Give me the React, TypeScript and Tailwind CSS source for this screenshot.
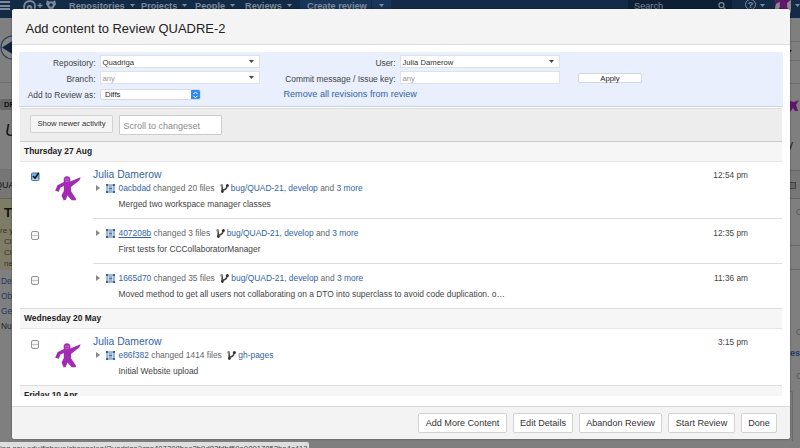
import React from "react";

const link = "text-[#3363a5]";

function Caret({ className = "" }: { className?: string }) {
  return (
    <svg className={className} width="5" height="3" viewBox="0 0 5 3">
      <path d="M0 0h5L2.5 3z" fill="currentColor" />
    </svg>
  );
}

function Avatar({ color = "#a32bb4" }: { color?: string }) {
  return (
    <svg width="26" height="25" viewBox="0 0 26 25" className="block shrink-0">
      <path
        d="M8.6 4.2C8.4 1.6 10 .3 12 .3s3.600 1.200 3.400 3.900l-.3 1.300L25.600 1.200l-1.100 3L16 11l.2 4.500 4.800 7.300-.2 1.400h-4.100l-4.200-4.700-1.700 4.300-2.100.8-2.200-5L8.800 15V10l-3.600 1.800-1.300 4L.2 14.800l2.300-5.600L8.900 6z"
        fill={color}
      />
      <path d="M10 3.200h4.100M10.300 5c1 .8 2.600.8 3.500 0" stroke="#dfa5e8" strokeWidth=".6" fill="none" />
    </svg>
  );
}

function CommitIcon() {
  return (
    <svg width="9" height="9" viewBox="0 0 9 9" className="block shrink-0">
      <path d="M1 1h7v7H1z" fill="#e9f0f8" stroke="#4f78a5" strokeWidth="1" />
      <path d="M0 0h2v2H0zM7 0h2v2H7zM0 7h2v2H0zM7 7h2v2H7z" fill="#376795" />
      <path d="M2.700 3h3.600M2.700 4.500h3.600M2.700 6h3.600" stroke="#376795" strokeWidth=".9" />
    </svg>
  );
}

function BranchIcon() {
  return (
    <svg width="9" height="9" viewBox="0 0 9 9" className="block shrink-0">
      <path d="M2.200 1.500v6M2.400 6.300C5.600 6 6.900 4.500 7.200 1.700" stroke="#444" strokeWidth="1.500" fill="none" />
      <circle cx="1.700" cy="1.400" r="1.400" fill="#888" />
      <circle cx="7.400" cy="1.500" r="1.500" fill="#333" />
      <circle cx="2.400" cy="7.500" r="1.400" fill="#333" />
    </svg>
  );
}

function Checkbox({ checked = false }: { checked?: boolean }) {
  if (checked) {
    return (
      <svg width="10" height="11" viewBox="0 0 10 11" className="block">
        <rect x="1.500" y="2" width="7.500" height="7.500" rx="1" fill="#79b3e8" stroke="#4a6f99" />
        <path d="M2.500 7.500H8v1.500H2.500z" fill="#b9e4fa" />
        <path d="M3 5l2 2.300L8.800 1.800" stroke="#111" strokeWidth="1.500" fill="none" />
      </svg>
    );
  }
  return (
    <div className="mt-[2px] ml-px flex h-[9px] w-[8px] flex-col justify-center rounded-[2px] border border-[#959595] bg-[#f5f5f5]">
      <div className="h-px bg-[#c4c4c4]" />
    </div>
  );
}

type CommitProps = {
  hash: string;
  files: string;
  message: string;
  time: string;
  pages?: boolean;
  author?: boolean;
  checked?: boolean;
  hovered?: boolean;
  last?: boolean;
};

function Commit({ hash, files, message, time, pages, author, checked, hovered, last }: CommitProps) {
  return (
    <div className={`flex ${author ? (last ? "h-[56px]" : "h-[57px]") : last ? "h-[44px]" : "h-[45px]"}`}>
      <div className={`w-[35px] shrink-0 pl-[10px] ${author ? "pt-[9px]" : "pt-[10px]"}`}>
        <Checkbox checked={checked} />
      </div>
      <div className="w-[38px] shrink-0 pt-[14px]">{author && <Avatar />}</div>
      <div
        className={`flex grow justify-between pr-[34px] text-[8.420px] text-[#444] ${last ? "" : "border-b border-[#ddd]"} ${author ? "pt-[5px]" : "pt-[7px]"}`}
      >
        <div>
          {author && <div className={`h-[14px] text-[10.350px] leading-[16px] ${link}`}>Julia Damerow</div>}
          <div className="flex h-[14px] items-center leading-[14px] whitespace-pre text-[#666]">
            <svg width="4" height="6" viewBox="0 0 4 6" className="mr-[6px] ml-[3px]">
              <path d="M0 0l4 3-4 3z" fill="#888" />
            </svg>
            <CommitIcon />
            <span className={`ml-[3.500px] ${link} ${hovered ? "underline underline-offset-1" : ""}`}>{hash}</span>
            <span className="mr-[5.500px]"> changed {files} files</span>
            <BranchIcon />
            {pages ? (
              <span className={`ml-[2px] ${link}`}>gh-pages</span>
            ) : (
              <span className="ml-[2px]">
                <span className={link}>bug/QUAD-21</span>, <span className={link}>develop</span> and{" "}
                <span className={link}>3 more</span>
              </span>
            )}
          </div>
          <div className="mt-px h-[16px] pl-[25.500px] leading-[16px]">{message}</div>
        </div>
        <div className={`text-[8.320px] leading-[14px] ${author ? "pt-[1px]" : ""}`}>{time}</div>
      </div>
    </div>
  );
}

function DayHeading({ children, first }: { children: React.ReactNode; first?: boolean }) {
  return (
    <div
      className={`border-b border-b-[#e6e6e6] bg-[#f6f6f6] pl-[4px] text-[8.450px] font-bold text-[#222] ${first ? "h-[20px] leading-[19px]" : "h-[21px] border-t border-t-[#ddd] leading-[19px]"}`}
    >
      {children}
    </div>
  );
}

function ComboBox({ value, muted, arrow = true }: { value: string; muted?: boolean; arrow?: boolean }) {
  return (
    <div
      className={`flex h-[13px] w-[160px] items-center justify-between border border-[#dde1e8] bg-white pr-[5px] pl-[1.500px] text-[7.700px] leading-[11px] ${muted ? "text-[#999]" : "text-[#333]"}`}
    >
      <span className="pt-px">{value}</span>
      {arrow && <Caret className="text-[#444]" />}
    </div>
  );
}

function FooterButton({ children, width }: { children: React.ReactNode; width: string }) {
  return (
    <button
      className={`h-[20px] rounded-[2px] border border-[#d2d2d2] bg-white text-center text-[9.080px] leading-[18px] whitespace-nowrap text-[#333] ${width}`}
    >
      {children}
    </button>
  );
}

function NavItem({ children, className }: { children: React.ReactNode; className: string }) {
  return (
    <div className={`flex shrink-0 items-center whitespace-nowrap ${className}`}>
      <span>{children}</span>
      <Caret className="ml-[5px]" />
    </div>
  );
}

function DimmedPage() {
  return (
    <div className="flex h-[448px] w-[800px] flex-col overflow-hidden bg-[#7f7f7f] text-[#111]">
      <div className="flex h-[18px] shrink-0 bg-[#142b48] text-[9.200px] leading-[12px] font-bold text-[#7d8a9b]">
        <div className="mt-[1px] h-[9px] w-[10px] shrink-0 border-y-2 border-[#7d8a9b]">
          <div className="mt-[1.500px] h-[2px] bg-[#7d8a9b]" />
        </div>
        <svg width="34" height="12" viewBox="0 0 34 12" className="ml-[13px] shrink-0">
          <path d="M1.500 10C0 4 3 1 7 1s6 3 4.500 8M4.500 9c0-4 4-4 4 0" fill="none" stroke="#7d8a9b" strokeWidth="1.800" />
          <path d="M14.500 5.500h5M17 3v5" stroke="#7d8a9b" strokeWidth="1.400" />
          <path d="M24 0c1 2 7 2 8 0l1 4-3 5h-4l-3-5z" fill="#7d8a9b" />
          <circle cx="28" cy="5" r="1.800" fill="#142b48" />
        </svg>
        <NavItem className="ml-[12px] h-[11px] w-[72px]">Repositories</NavItem>
        <NavItem className="h-[11px] w-[54px]">Projects</NavItem>
        <NavItem className="h-[11px] w-[50px]">People</NavItem>
        <NavItem className="h-[11px] w-[55px]">Reviews</NavItem>
        <div className="flex h-[18px] w-[91px] shrink-0 bg-[#19355a] pl-[7px]">
          <span className="w-[65px] border-r border-[#102b49] leading-[12px] whitespace-nowrap">Create review</span>
          <Caret className="mt-[4px] ml-[7px]" />
        </div>
        <div className="ml-[237px] flex h-[11px] w-[104px] shrink-0 items-center justify-between bg-[#0e2035] pr-[6px] pl-[6px] font-normal">
          <span>Search</span>
          <svg width="8" height="8" viewBox="0 0 8 8">
            <path d="M5 5l2.500 2.500M6 3.200a2.500 2.500 0 1 1-5 0 2.500 2.500 0 0 1 5 0" stroke="#7d8a9b" fill="none" strokeWidth="1.200" />
          </svg>
        </div>
        <div className="mt-[-1px] ml-[13px] flex h-[11px] w-[11px] shrink-0 items-center justify-center rounded-full border border-[#7d8a9b]">
          ?
        </div>
        <Caret className="mt-[4px] ml-[4px] shrink-0" />
        <div className="ml-[10px] h-[13px] w-[16px] shrink-0 overflow-hidden bg-[#8b8b8b]">
          <div className="-mt-[8px] -ml-[4px]">
            <Avatar color="#5f176b" />
          </div>
        </div>
        <Caret className="mt-[4px] ml-[4px] shrink-0" />
      </div>

      <div className="flex grow justify-between text-[8.400px]">
        <div className="flex w-[12px] flex-col overflow-hidden whitespace-nowrap">
          <div className="h-[65px] shrink-0 border-b border-[#6d6d6d] pt-[17px]">
            <svg width="25" height="25" viewBox="0 0 25 25">
              <circle cx="12.500" cy="12.500" r="11.500" fill="#858585" stroke="#263d5b" strokeWidth="1.200" />
              <path d="M2 12.500L14 5v15z" fill="#0f2542" />
            </svg>
          </div>
          <div className="mt-[16px] h-[11px] shrink-0 rounded-l-[2px] bg-[#656565] pl-[4px] text-[7.500px] leading-[11px] font-bold">DR</div>
          <div className="h-[60px] shrink-0 border-b border-[#707070] pt-[11px] pl-[5px] text-[17px] leading-[20px] italic">U</div>
          <div className="h-[28px] shrink-0 bg-[#767676] text-[9px] leading-[30px] -indent-[5px]">QUA</div>
          <div className="h-[72px] shrink-0 border-t border-[#68664f] bg-[#7e7c66] text-[8px] leading-[11px] text-[#333]">
            <div className="h-[24px] pl-[4px] text-[13px] leading-[28px] font-bold text-[#111]">T</div>
            <div className="pt-[2px]">re y</div>
            <div className="pl-[4px]">Cl</div>
            <div className="pl-[4px]">Cl</div>
            <div className="pl-[4px]">ne</div>
          </div>
          <div className="pt-[4px] pl-[1px] leading-[15px] text-[#1d3a60]">
            <div>Det</div>
            <div>Obj</div>
            <div>Ge</div>
            <div className="text-[#222]">Nu</div>
          </div>
        </div>

        <div className="flex w-[10px] flex-col overflow-hidden whitespace-nowrap">
          <div className="h-[24px] shrink-0 border-b border-[#6d6d6d]" />
          <div className="h-[19px] shrink-0 border-b border-[#6d6d6d] pt-[8px] text-[#222]">
            <Caret className="-ml-[3px]" />
          </div>
          <div className="h-[23px] shrink-0 border-b border-[#6d6d6d]" />
          <div className="h-[70px] shrink-0 pt-[15px]">
            <div className="h-[15px] w-[9px] overflow-hidden">
              <svg width="10" height="14" viewBox="0 0 10 14">
                <path d="M0 2l4 1 5-2-3 5 2 6H5L3 9l-3 4z" fill="#5f176b" />
              </svg>
            </div>
            <div className="mt-[23px] -ml-[2px] text-[10px] leading-[15px]">y</div>
          </div>
          <div className="mt-[16px] h-[29px] shrink-0 border-t border-b border-[#666] bg-[#777] pt-[11px]">
            <div className="h-[7px] w-[6px] border border-l-0 border-[#444] bg-[#666]" />
          </div>
          <div className="h-[47px] shrink-0 border-b border-[#686868] pt-[8px] pl-[6px] leading-[10px] text-[#555]">C</div>
          <div className="h-[24px] shrink-0 border-b border-[#686868]" />
          <div className="h-[57px] shrink-0" />
          <div className="h-[41px] shrink-0 pl-[6px] text-[#555]">
            <div className="leading-[10px]">C</div>
            <div className="mt-[10px] -ml-[6px] text-[9px] leading-[12px] font-bold text-[#1d3a60]">es</div>
          </div>
          <div className="pt-[3px] pl-[6px] leading-[10px] text-[#555]">C</div>
          <div className="mt-[10px] h-[50px] w-[3px] rounded-tr-[2px] border-t border-r border-[#686868]" />
        </div>
      </div>
    </div>
  );
}

export default function App() {
  return (
    <div className="relative h-[448px] w-[800px] overflow-hidden font-['Liberation_Sans',Arial,sans-serif]">
      <DimmedPage />

      <div className="absolute top-[442px] left-0 h-[6px] w-[309px] overflow-hidden rounded-tr-[2px] bg-[#dedede] text-[7.700px] leading-[13px] whitespace-nowrap text-[#444]">
        ing.asu.edu/fisheye/changelog/Quadriga?cs=407208bee2b9d82fdbf59a98917852ba4c413
      </div>

      <div className="absolute top-[9px] left-[12px] flex h-[430px] w-[778px] flex-col overflow-hidden rounded-[3px] bg-white shadow-[0_0_2px_rgba(0,0,0,0.5)]">
        <header className="h-[36px] shrink-0 border-b border-[#dedede] bg-[#f4f4f4] pl-[13.500px] text-[12.950px] leading-[39px] text-[#222]">
          Add content to Review QUADRE-2
        </header>

        <main className="flex h-[361px] shrink-0 flex-col pt-[7px] pb-[10px]">
          <div className="ml-[7px] flex h-[55px] w-[764px] shrink-0 border-b border-[#c9d3e2] bg-[#e9effc] text-[8.420px] text-[#444]">
            <div className="grid w-[241px] grid-cols-[76.500px_1fr] content-start gap-x-[4.500px] gap-y-[3px] pt-[3px] text-right leading-[17px]">
              <span className="h-[13px]">Repository:</span>
              <ComboBox value="Quadriga" />
              <span className="h-[13px]">Branch:</span>
              <ComboBox value="any" muted />
              <span className="h-[13px]">Add to Review as:</span>
              <div className="mt-[2px] flex h-[11px] w-[101px] justify-between overflow-hidden rounded-[2.500px] border border-[#d5dae3] bg-white pl-[4px] text-[7.800px] leading-[10px] text-[#222]">
                <span>Diffs</span>
                <svg width="9" height="10" viewBox="0 0 9 10" className="block bg-[#3089f4]">
                  <path d="M2.500 4l2-2 2 2M2.500 5.800l2 2 2-2" stroke="#fff" strokeWidth="1" fill="none" />
                </svg>
              </div>
            </div>
            <div className="ml-[23px] w-[278px]">
              <div className="grid grid-cols-[112.500px_1fr] gap-x-[4.500px] gap-y-[3px] pt-[3px] text-right leading-[17px]">
                <span className="h-[13px]">User:</span>
                <ComboBox value="Julia Damerow" />
                <span className="h-[13px] whitespace-nowrap">Commit message / Issue key:</span>
                <ComboBox value="any" muted arrow={false} />
              </div>
              <div className={`pl-[0.500px] text-[9.100px] leading-[21px] ${link}`}>Remove all revisions from review</div>
            </div>
            <button className="mt-[21px] ml-[17px] h-[10px] w-[64px] rounded-[2px] border border-[#d3d7df] bg-white text-center text-[7.800px] leading-[9px] text-[#222]">
              Apply
            </button>
          </div>

          <div className="mt-px ml-[8px] flex h-[34px] w-[762px] shrink-0 border-y border-t-[#ddd] border-b-[#ccc] bg-[#ededed]">
            <button className="mt-[6px] ml-[10px] h-[18px] w-[83px] rounded-[2px] border border-[#d2d2d2] bg-[#f5f5f5] text-[7.730px] leading-[16px] text-[#333]">
              Show newer activity
            </button>
            <div className="mt-[6px] ml-[6px] h-[20px] w-[103px] rounded-[1px] border border-[#ccc] bg-white pl-[3.500px] text-[9px] leading-[20px] text-[#8a8a8a]">
              Scroll to changeset
            </div>
          </div>

          <div className="ml-[8px] w-[762px] grow overflow-hidden">
            <DayHeading first>Thursday 27 Aug</DayHeading>
            <Commit author checked hash="0acbdad" files="20" message="Merged two workspace manager classes" time="12:54 pm" />
            <Commit hovered hash="407208b" files="3" message="First tests for CCCollaboratorManager" time="12:35 pm" />
            <Commit
              last
              hash="1665d70"
              files="35"
              message="Moved method to get all users not collaborating on a DTO into superclass to avoid code duplication. o…"
              time="11:36 am"
            />
            <DayHeading>Wednesday 20 May</DayHeading>
            <Commit author last pages hash="e86f382" files="1414" message="Initial Website upload" time="3:15 pm" />
            <DayHeading>Friday 10 Apr</DayHeading>
          </div>
        </main>

        <footer className="flex h-[33px] shrink-0 justify-end gap-[6px] border-t border-[#d8d8d8] bg-[#f3f3f3] pt-[6px] pr-[13px]">
          <FooterButton width="w-[89px]">Add More Content</FooterButton>
          <FooterButton width="w-[60px]">Edit Details</FooterButton>
          <FooterButton width="w-[83px]">Abandon Review</FooterButton>
          <FooterButton width="w-[67px]">Start Review</FooterButton>
          <FooterButton width="w-[36px]">Done</FooterButton>
        </footer>
      </div>
    </div>
  );
}
